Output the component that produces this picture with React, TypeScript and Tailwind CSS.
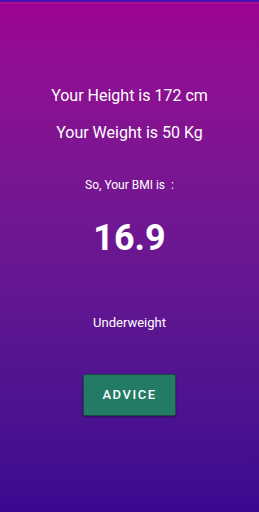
export default function App() {
  return (
    <div
      className="flex h-[512px] w-[259px] flex-col items-center bg-gradient-to-b from-[#9c0391] to-[#3a0890] text-white"
      style={{ fontFamily: "Roboto, 'Noto Sans', sans-serif" }}
    >
      <div className="h-[2px] w-full bg-[#4a12b4]" />
      <div className="h-[2px] w-full bg-[#a9108f]" />
      <p className="mt-[82px] text-[16px] leading-[20px]">Your Height is 172 cm</p>
      <p className="mt-[17px] text-[16px] leading-[20px]">Your Weight is 50 Kg</p>
      <p className="mt-[34px] text-[12px] leading-[16px]">So, Your BMI is&nbsp; :</p>
      <p className="mt-[25px] text-[36px] font-bold leading-[40px]">16.9</p>
      <p className="mt-[56px] text-[13px] leading-[18px]">Underweight</p>
      <button className="mt-[42px] h-[42px] w-[93px] rounded-[2px] border border-[#1a4a40] bg-[#237a67] text-[13px] font-medium tracking-[0.12em] text-white shadow-[0_1px_2px_rgba(0,0,0,0.4)]">
        ADVICE
      </button>
    </div>
  );
}
